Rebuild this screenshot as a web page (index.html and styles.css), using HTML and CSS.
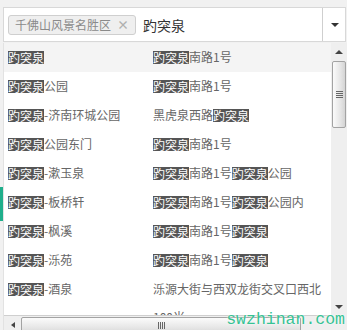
FILE: index.html
```html
<!DOCTYPE html>
<html lang="zh">
<head>
<meta charset="utf-8">
<title>select</title>
<link rel="stylesheet" href="styles.css">
</head>
<body>
<div class="wrap">
  <div class="select">
    <div class="choices">
      <span class="tag"><span class="tag-text">千佛山风景名胜区</span><span class="tag-x">×</span></span>
      <span class="query">趵突泉</span>
    </div>
    <div class="arrow-btn"><span class="caret-down"></span></div>
  </div>
  <div class="dropdown">
    <div class="viewport">
      <div class="row active"><div class="c1"><b class="hl">趵突泉</b></div><div class="c2"><b class="hl">趵突泉</b>南路1号</div></div>
      <div class="row"><div class="c1"><b class="hl">趵突泉</b>公园</div><div class="c2"><b class="hl">趵突泉</b>南路1号</div></div>
      <div class="row"><div class="c1"><b class="hl">趵突泉</b>-济南环城公园</div><div class="c2">黑虎泉西路<b class="hl">趵突泉</b></div></div>
      <div class="row"><div class="c1"><b class="hl">趵突泉</b>公园东门</div><div class="c2"><b class="hl">趵突泉</b>南路1号</div></div>
      <div class="row"><div class="c1"><b class="hl">趵突泉</b>-漱玉泉</div><div class="c2"><b class="hl">趵突泉</b>南路1号<b class="hl">趵突泉</b>公园</div></div>
      <div class="row"><div class="c1"><b class="hl">趵突泉</b>-板桥轩</div><div class="c2"><b class="hl">趵突泉</b>南路1号<b class="hl">趵突泉</b>公园内</div></div>
      <div class="row"><div class="c1"><b class="hl">趵突泉</b>-枫溪</div><div class="c2"><b class="hl">趵突泉</b>南路1号<b class="hl">趵突泉</b></div></div>
      <div class="row"><div class="c1"><b class="hl">趵突泉</b>-泺苑</div><div class="c2"><b class="hl">趵突泉</b>南路1号<b class="hl">趵突泉</b></div></div>
      <div class="row"><div class="c1"><b class="hl">趵突泉</b>-酒泉</div><div class="c2">泺源大街与西双龙街交叉口西北100米</div></div>
    </div>
    <div class="vbar">
      <span class="tri-up"></span>
      <div class="vtrack"><div class="vthumb"><span class="grip-h"></span></div></div>
      <span class="tri-down"></span>
    </div>
    <div class="hbar">
      <span class="tri-left"></span>
      <div class="hthumb"><span class="grip-v"></span></div>
    </div>
    <div class="corner"></div>
  </div>
</div>
<div class="side-mark"></div>
<div class="watermark">swzhinan.com</div>
</body>
</html>
```
FILE: styles.css
```css
* { box-sizing: border-box; }
html, body { margin: 0; padding: 0; }
body {
  width: 347px;
  height: 330px;
  overflow: hidden;
  background: #f1f1f1;
  font-family: "Noto Sans CJK SC", "Noto Sans", sans-serif;
  position: relative;
}
.wrap {
  padding: 7px 1px 0 3px;
}
.select {
  height: 35px;
  border: 1px solid #d8d8d8;
  background: #fff;
  display: flex;
}
.choices {
  flex: 1;
  display: flex;
  align-items: center;
  padding-left: 4px;
  gap: 7px;
}
.tag {
  display: inline-flex;
  align-items: center;
  height: 20px;
  border: 1px solid #cfcfcf;
  border-radius: 3px;
  background: #efefef;
  padding: 0 6px 0 6px;
  font-size: 12px;
  line-height: 18px;
  color: #8a8a8a;
}
.tag-x {
  margin-left: 6px;
  color: #b0b0b0;
  font-weight: bold;
  font-size: 12px;
}
.query {
  font-size: 14px;
  color: #333;
  line-height: 20px;
}
.arrow-btn {
  width: 23px;
  border-left: 1px solid #cfcfcf;
  display: flex;
  align-items: center;
  justify-content: center;
}
.caret-down {
  width: 0; height: 0;
  border-left: 4px solid transparent;
  border-right: 4px solid transparent;
  border-top: 4px solid #333;
  margin-left: 1px;
}
.dropdown {
  margin-top: 1px;
  margin-right: -1px;
  height: 287px;
  border-left: 1px solid #e2e2e2;
  background: #fff;
  display: grid;
  grid-template-columns: 1fr 16px;
  grid-template-rows: 272px 15px;
}
.viewport {
  overflow: hidden;
}
.row {
  display: grid;
  grid-template-columns: 145px 170px;
  padding: 0 0 1px 4px;
  font-size: 12px;
  line-height: 28px;
  color: #666;
}
.row.active { background: #f4f4f4; }
.c1 { white-space: nowrap; }
.hl {
  display: inline-block;
  font-weight: normal;
  background: #555;
  color: #fff;
  height: 13px;
  line-height: 13px;
  vertical-align: -1px;
}
.vbar {
  background: #efefef;
  display: flex;
  flex-direction: column;
  align-items: center;
}
.tri-up {
  width: 0; height: 0;
  border-left: 4px solid transparent;
  border-right: 4px solid transparent;
  border-bottom: 4px solid #444;
  margin-top: 7px;
}
.vtrack {
  flex: 1;
  width: 100%;
  padding: 7px 1px 0 1px;
}
.vthumb {
  height: 67px;
  border: 1px solid #a3a3a3;
  border-radius: 2px;
  background: linear-gradient(to right, #fbfbfb, #e6e6e6 60%, #d4d4d4);
  display: flex;
  align-items: center;
  justify-content: center;
}
.grip-h {
  width: 7px;
  height: 7px;
  background: repeating-linear-gradient(to bottom, #666 0 1px, transparent 1px 2px);
}
.tri-down {
  width: 0; height: 0;
  border-left: 4px solid transparent;
  border-right: 4px solid transparent;
  border-top: 4px solid #444;
  margin-bottom: 6px;
}
.hbar {
  background: #efefef;
  border-top: 1px solid #cfcfcf;
  display: flex;
  align-items: flex-start;
  padding-top: 1px;
  overflow: hidden;
}
.tri-left {
  width: 0; height: 0;
  border-top: 3px solid transparent;
  border-bottom: 3px solid transparent;
  border-right: 4px solid #444;
  margin: 5px 0 0 7px;
}
.hthumb {
  margin-left: 6px;
  width: 280px;
  height: 18px;
  border: 1px solid #a3a3a3;
  border-radius: 2px;
  background: linear-gradient(to bottom, #fbfbfb, #e6e6e6 60%, #d4d4d4);
  display: flex;
  justify-content: center;
  padding-top: 4px;
}
.grip-v {
  width: 7px;
  height: 7px;
  background: repeating-linear-gradient(to right, #666 0 1px, transparent 1px 2px);
}
.corner { background: #efefef; }
.side-mark {
  position: absolute;
  left: 0;
  top: 187px;
  width: 3px;
  height: 34px;
  background: #1fae8b;
}
.watermark {
  position: absolute;
  right: 2px;
  bottom: 1px;
  font-family: "Liberation Mono", monospace;
  font-size: 16.5px;
  line-height: 18px;
  color: #36c293;
  text-shadow: 0 0 2px #fff;
}
```
